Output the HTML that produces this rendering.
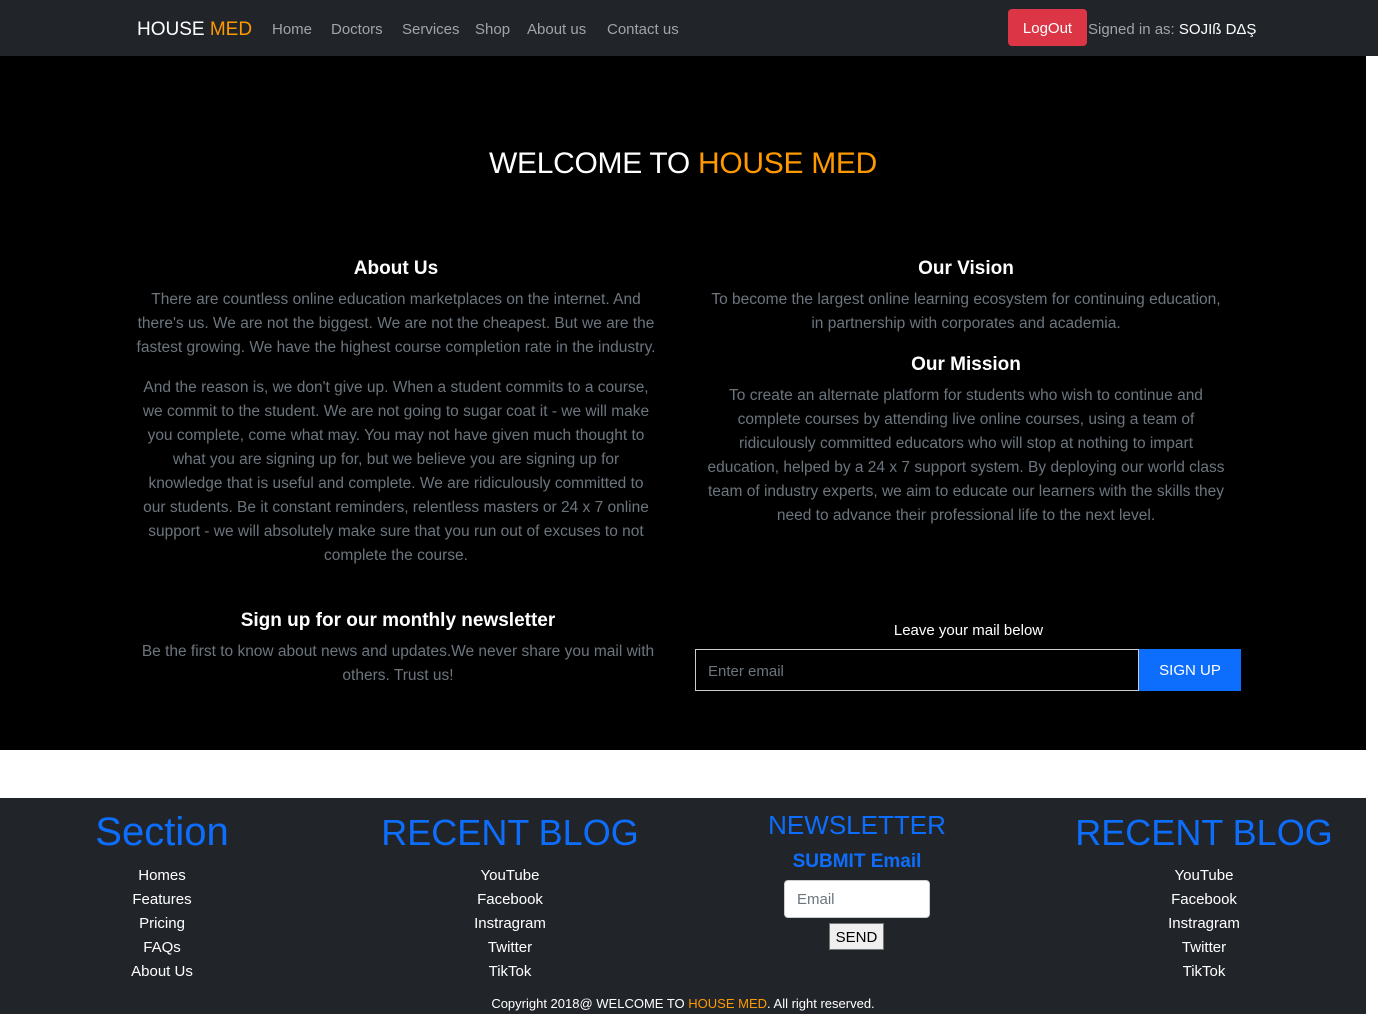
<!DOCTYPE html>
<html><head><meta charset="utf-8"><style>
*{margin:0;padding:0;box-sizing:border-box}
body{width:1378px;height:1014px;background:#fff;font-family:"Liberation Sans",sans-serif;position:relative;overflow:hidden}
.nav{position:absolute;left:0;top:0;width:1378px;height:56px;background:#212529}
.abs{position:absolute;white-space:nowrap}
.brand{left:137px;top:19px;font-size:19px;color:#fff}
.nl{top:21px;font-size:15px;color:#a0a4a8}
.logout{left:1008px;top:9px;width:79px;height:37px;background:#dc3545;border-radius:4px;color:#fff;font-size:15px;line-height:39px;text-align:center}
.hero{position:absolute;left:0;top:56px;width:1366px;height:694px;background:#000}
.c{text-align:center;white-space:nowrap}
.h4{color:#fff;font-weight:bold;font-size:19px}
.p{color:#6c757d;font-size:15.5px;line-height:24px}
.foot{position:absolute;left:0;top:798px;width:1366px;height:216px;background:#212529}
.fl{color:#fff;font-size:15px;line-height:24px}
.blue{color:#0d6efd}
</style></head><body>
<div class="nav">
<div class="abs brand">HOUSE <span style="color:#f90">MED</span></div>
<div class="abs nl" style="left:272px">Home</div>
<div class="abs nl" style="left:331px">Doctors</div>
<div class="abs nl" style="left:402px">Services</div>
<div class="abs nl" style="left:475px">Shop</div>
<div class="abs nl" style="left:527px">About us</div>
<div class="abs nl" style="left:607px">Contact us</div>
<div class="abs logout">LogOut</div>
<div class="abs nl" style="left:1088px">Signed in as: <span style="color:#fff">SOJIß DΔŞ</span></div>
</div>
<div class="hero">
<div class="abs" style="left:0;width:1366px;top:91px;text-align:center;font-size:30px;color:#fff;letter-spacing:-0.3px">WELCOME TO <span style="color:#f90">HOUSE MED</span></div>
<div class="abs c" style="left:126px;width:540px;top:202px"><div class="h4">About Us</div>
<div class="p" style="margin-top:8px">There are countless online education marketplaces on the internet. And<br>there's us. We are not the biggest. We are not the cheapest. But we are the<br>fastest growing. We have the highest course completion rate in the industry.</div>
<div class="p" style="margin-top:16px">And the reason is, we don't give up. When a student commits to a course,<br>we commit to the student. We are not going to sugar coat it - we will make<br>you complete, come what may. You may not have given much thought to<br>what you are signing up for, but we believe you are signing up for<br>knowledge that is useful and complete. We are ridiculously committed to<br>our students. Be it constant reminders, relentless masters or 24 x 7 online<br>support - we will absolutely make sure that you run out of excuses to not<br>complete the course.</div></div>
<div class="abs c" style="left:696px;width:540px;top:202px"><div class="h4">Our Vision</div>
<div class="p" style="margin-top:8px">To become the largest online learning ecosystem for continuing education,<br>in partnership with corporates and academia.</div>
<div class="h4" style="margin-top:18px">Our Mission</div>
<div class="p" style="margin-top:8px">To create an alternate platform for students who wish to continue and<br>complete courses by attending live online courses, using a team of<br>ridiculously committed educators who will stop at nothing to impart<br>education, helped by a 24 x 7 support system. By deploying our world class<br>team of industry experts, we aim to educate our learners with the skills they<br>need to advance their professional life to the next level.</div></div>
<div class="abs c" style="left:128px;width:540px;top:554px"><div class="h4">Sign up for our monthly newsletter</div>
<div class="p" style="margin-top:8px">Be the first to know about news and updates.We never share you mail with<br>others. Trust us!</div></div>
<div class="abs" style="left:696px;width:545px;top:566px;text-align:center;color:#fff;font-size:15px">Leave your mail below</div>
<div class="abs" style="left:695px;top:593px;width:444px;height:42px;border:1px solid #ccc;color:#6c757d;font-size:15px;padding:13px 12px">Enter email</div>
<div class="abs" style="left:1139px;top:593px;width:102px;height:42px;background:#0d6efd;color:#fff;font-size:15px;line-height:44px;text-align:center">SIGN UP</div>
</div>
<div class="foot">
<div class="abs c blue" style="left:62px;width:200px;top:12px;font-size:40px">Section</div>
<div class="abs c fl" style="left:62px;width:200px;top:66px">Homes<br>Features<br>Pricing<br>FAQs<br>About Us</div>
<div class="abs c blue" style="left:360px;width:300px;top:14px;font-size:36px">RECENT BLOG</div>
<div class="abs c fl" style="left:410px;width:200px;top:66px">YouTube<br>Facebook<br>Instragram<br>Twitter<br>TikTok</div>
<div class="abs c blue" style="left:707px;width:300px;top:12px;font-size:26px">NEWSLETTER</div>
<div class="abs c blue" style="left:707px;width:300px;top:53px;font-size:19px;font-weight:bold">SUBMIT Email</div>
<div class="abs" style="left:784px;top:82px;width:146px;height:38px;background:#fff;border-radius:4px;border:1px solid #ccc;color:#6c757d;font-size:15px;padding:10px 12px">Email</div>
<div class="abs" style="left:829px;top:125px;width:55px;height:27px;background:#efefef;border:1px solid #767676;font-size:15px;line-height:27px;text-align:center;color:#000">SEND</div>
<div class="abs c blue" style="left:1054px;width:300px;top:14px;font-size:36px">RECENT BLOG</div>
<div class="abs c fl" style="left:1104px;width:200px;top:66px">YouTube<br>Facebook<br>Instragram<br>Twitter<br>TikTok</div>
<div class="abs c" style="left:0;width:1366px;top:198px;color:#fff;font-size:13px">Copyright 2018@ WELCOME TO <span style="color:#f90">HOUSE MED</span>. All right reserved.</div>
</div>
</body></html>
